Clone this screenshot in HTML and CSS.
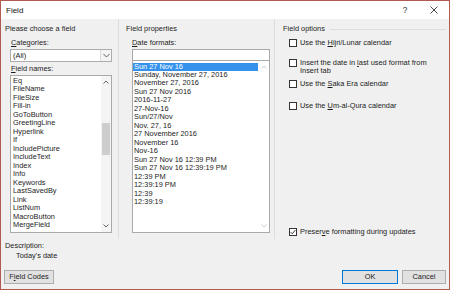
FILE: index.html
```html
<!DOCTYPE html>
<html>
<head>
<meta charset="utf-8">
<link rel="stylesheet" href="styles.css">
</head>
<body>
<div class="window">
  <div class="titlebar">
    <span class="title">Field</span>
    <span class="help">?</span>
    <span class="close"><svg width="8" height="8" viewBox="0 0 8 8"><path d="M0.5 0.5 L7.5 7.5 M7.5 0.5 L0.5 7.5" stroke="#333" stroke-width="0.9" fill="none"/></svg></span>
  </div>
  <div class="columns">
    <section class="col col-choose">
      <div class="heading">Please choose a field</div>
      <div class="label"><u>C</u>ategories:</div>
      <div class="combo">
        <span class="combo-value">(All)</span>
        <span class="combo-btn"><svg width="7" height="5" viewBox="0 0 7 5"><path d="M0.5 1 L3.5 4 L6.5 1" stroke="#555" stroke-width="0.9" fill="none"/></svg></span>
      </div>
      <div class="label label-names"><u>F</u>ield names:</div>
      <div class="listbox names">
        <ul class="items">
          <li>Eq</li><li>FileName</li><li>FileSize</li><li>Fill-in</li><li>GoToButton</li><li>GreetingLine</li><li>Hyperlink</li><li>If</li><li>IncludePicture</li><li>IncludeText</li><li>Index</li><li>Info</li><li>Keywords</li><li>LastSavedBy</li><li>Link</li><li>ListNum</li><li>MacroButton</li><li>MergeField</li>
        </ul>
        <div class="scrollbar">
          <span class="arrow"><svg width="6" height="4" viewBox="0 0 6 4"><path d="M0.5 3.5 L3 1 L5.5 3.5" stroke="#555" stroke-width="0.9" fill="none"/></svg></span>
          <span class="track"><span class="thumb"></span></span>
          <span class="arrow"><svg width="6" height="4" viewBox="0 0 6 4"><path d="M0.5 0.5 L3 3 L5.5 0.5" stroke="#555" stroke-width="0.9" fill="none"/></svg></span>
        </div>
      </div>
    </section>
    <section class="col col-props">
      <div class="heading">Field properties</div>
      <div class="label"><u>D</u>ate formats:</div>
      <div class="textbox"></div>
      <div class="listbox dates">
        <ul class="items">
          <li class="selected">Sun 27 Nov 16</li>
          <li>Sunday, November 27, 2016</li>
          <li>November 27, 2016</li>
          <li>Sun 27 Nov 2016</li>
          <li>2016-11-27</li>
          <li>27-Nov-16</li>
          <li>Sun/27/Nov</li>
          <li>Nov. 27, 16</li>
          <li>27 November 2016</li>
          <li>November 16</li>
          <li>Nov-16</li>
          <li>Sun 27 Nov 16 12:39 PM</li>
          <li>Sun 27 Nov 16 12:39:19 PM</li>
          <li>12:39 PM</li>
          <li>12:39:19 PM</li>
          <li>12:39</li>
          <li>12:39:19</li>
        </ul>
        <div class="scrollbar disabled">
          <span class="arrow"><svg width="6" height="4" viewBox="0 0 6 4"><path d="M0.5 3.5 L3 1 L5.5 3.5" stroke="#c4c4c4" stroke-width="0.9" fill="none"/></svg></span>
          <span class="track"></span>
          <span class="arrow"><svg width="6" height="4" viewBox="0 0 6 4"><path d="M0.5 0.5 L3 3 L5.5 0.5" stroke="#c4c4c4" stroke-width="0.9" fill="none"/></svg></span>
        </div>
      </div>
    </section>
    <section class="col col-options">
      <div class="heading heading-line">Field options</div>
      <div class="option opt-1"><span class="check"></span><span class="opt-text">Use the <u>H</u>ijri/Lunar calendar</span></div>
      <div class="option opt-2 two-line"><span class="check"></span><span class="opt-text">Insert the date in <u>l</u>ast used format from<br>Insert tab</span></div>
      <div class="option opt-3"><span class="check"></span><span class="opt-text">Use the <u>S</u>aka Era calendar</span></div>
      <div class="option opt-4"><span class="check"></span><span class="opt-text">Use the <u>U</u>m-al-Qura calendar</span></div>
      <div class="option opt-preserve"><span class="check checked"><svg width="6" height="6" viewBox="0 0 6 6"><path d="M0.6 3.1 L2.3 4.8 L5.4 1" stroke="#222" stroke-width="0.9" fill="none"/></svg></span><span class="opt-text">Preser<u>v</u>e formatting during updates</span></div>
    </section>
  </div>
  <div class="description">
    <div class="desc-label">Description:</div>
    <div class="desc-text">Today's date</div>
  </div>
  <div class="buttons">
    <button class="btn btn-codes">F<u>i</u>eld Codes</button>
    <span class="spacer"></span>
    <button class="btn btn-ok">OK</button>
    <button class="btn btn-cancel">Cancel</button>
  </div>
</div>
</body>
</html>
```

FILE: styles.css
```css
* { box-sizing: border-box; margin: 0; padding: 0; }
html, body { width: 450px; height: 291px; overflow: hidden; background: #ffffff; }
body {
  font-family: "Liberation Sans", Arial, sans-serif;
  font-size: 7.4px;
  color: #1c1c1c;
}
u { text-decoration: underline; text-underline-offset: 1px; text-decoration-thickness: 0.7px; }

.window {
  width: 450px;
  height: 290px;
  border: 1px solid #b35a4e;
  background: #f0f0f0;
  display: flex;
  flex-direction: column;
}

.titlebar {
  height: 18px;
  background: #ffffff;
  display: flex;
  align-items: center;
  padding-left: 5px;
  padding-right: 7px;
  font-size: 8px;
  color: #111;
}
.title { flex: 1; }
.help { width: 16px; text-align: center; margin-right: 13px; font-size: 8.2px; color: #333; }
.close { width: 16px; display: flex; justify-content: center; align-items: center; }

.columns {
  display: grid;
  grid-template-columns: 118px 156px 1fr;
  height: 220px;
}
.col {
  display: flex;
  flex-direction: column;
  padding-top: 5px;
  border-right: 1px solid #dcdcdc;
}
.col-choose { padding-left: 4px; }
.col-props { padding-left: 7px; }
.col-options { padding-left: 8px; padding-right: 3px; padding-bottom: 2px; border-right: none; }

.heading { height: 10px; line-height: 10px; white-space: nowrap; }
.heading-line { display: flex; align-items: center; gap: 5px; }
.heading-line::after { content: ""; flex: 1; border-top: 1px solid #dedede; }

.label { height: 10px; line-height: 10px; margin-top: 4px; padding-left: 6px; white-space: nowrap; }
.label-names { margin-top: 2px; }

.combo {
  margin-top: 1px;
  margin-left: 5px;
  width: 102px;
  height: 13px;
  border: 1px solid #acacac;
  background: #ffffff;
  display: flex;
  align-items: stretch;
}
.combo-value { flex: 1; padding-left: 2px; line-height: 11px; }
.combo-btn {
  width: 11px;
  display: flex;
  align-items: center;
  justify-content: center;
  background: #f4f4f4;
  border-left: 1px solid #dcdcdc;
}

.listbox {
  background: #ffffff;
  border: 1px solid #a9a9a9;
  display: flex;
}
.names { margin-top: 1px; margin-left: 5px; width: 102px; height: 158px; }
.textbox {
  margin-top: 1px;
  margin-left: 6px;
  width: 138px;
  height: 12px;
  background: #ffffff;
  border: 1px solid #a9a9a9;
}
.dates { margin-left: 6px; width: 138px; height: 172px; border-top: none; }

.items { list-style: none; flex: 1; padding-top: 1px; overflow: hidden; }
.items li { height: 8.47px; line-height: 8.47px; white-space: nowrap; }
.names .items li { padding-left: 2px; }
.dates .items li { padding-left: 1px; }
.dates .items { padding-top: 1.5px; }
.items li.selected { background: #3592ec; color: #ffffff; }

.scrollbar {
  width: 10px;
  display: flex;
  flex-direction: column;
  background: #f4f4f4;
}
.dates .scrollbar { width: 11px; background: #ffffff; }
.arrow { height: 12px; display: flex; align-items: center; justify-content: center; }
.track { flex: 1; display: flex; flex-direction: column; }
.thumb { margin-top: 35px; height: 32px; margin-left: 1px; margin-right: 1px; background: #cdcdcd; }

.option { display: flex; align-items: flex-start; padding-left: 6px; line-height: 10px; white-space: nowrap; }
.check {
  width: 8px;
  height: 8px;
  margin-top: 1px;
  margin-right: 3px;
  flex: none;
  border: 1px solid #333;
  background: #ffffff;
  display: flex;
  align-items: center;
  justify-content: center;
}
.two-line { line-height: 8.5px; }
.two-line .check { margin-top: 0.25px; }
.opt-1 { margin-top: 4px; }
.opt-2 { margin-top: 10.75px; }
.opt-3 { margin-top: 3.25px; }
.opt-4 { margin-top: 12px; }
.opt-preserve { margin-top: auto; }

.description { margin-top: 2px; padding-left: 4px; line-height: 10px; }
.desc-text { padding-left: 11px; }

.buttons {
  margin-top: 9px;
  display: flex;
  padding-left: 3px;
  padding-right: 3px;
  height: 14px;
}
.spacer { flex: 1; }
.btn {
  font-family: inherit;
  font-size: 7.4px;
  color: #1c1c1c;
  background: #e1e1e1;
  border: 1px solid #adadad;
  height: 14px;
  line-height: 12px;
  text-align: center;
}
.btn-codes { width: 50px; }
.btn-ok { width: 56px; margin-right: 4px; border-color: #0078d7; }
.btn-cancel { width: 44px; }
```
